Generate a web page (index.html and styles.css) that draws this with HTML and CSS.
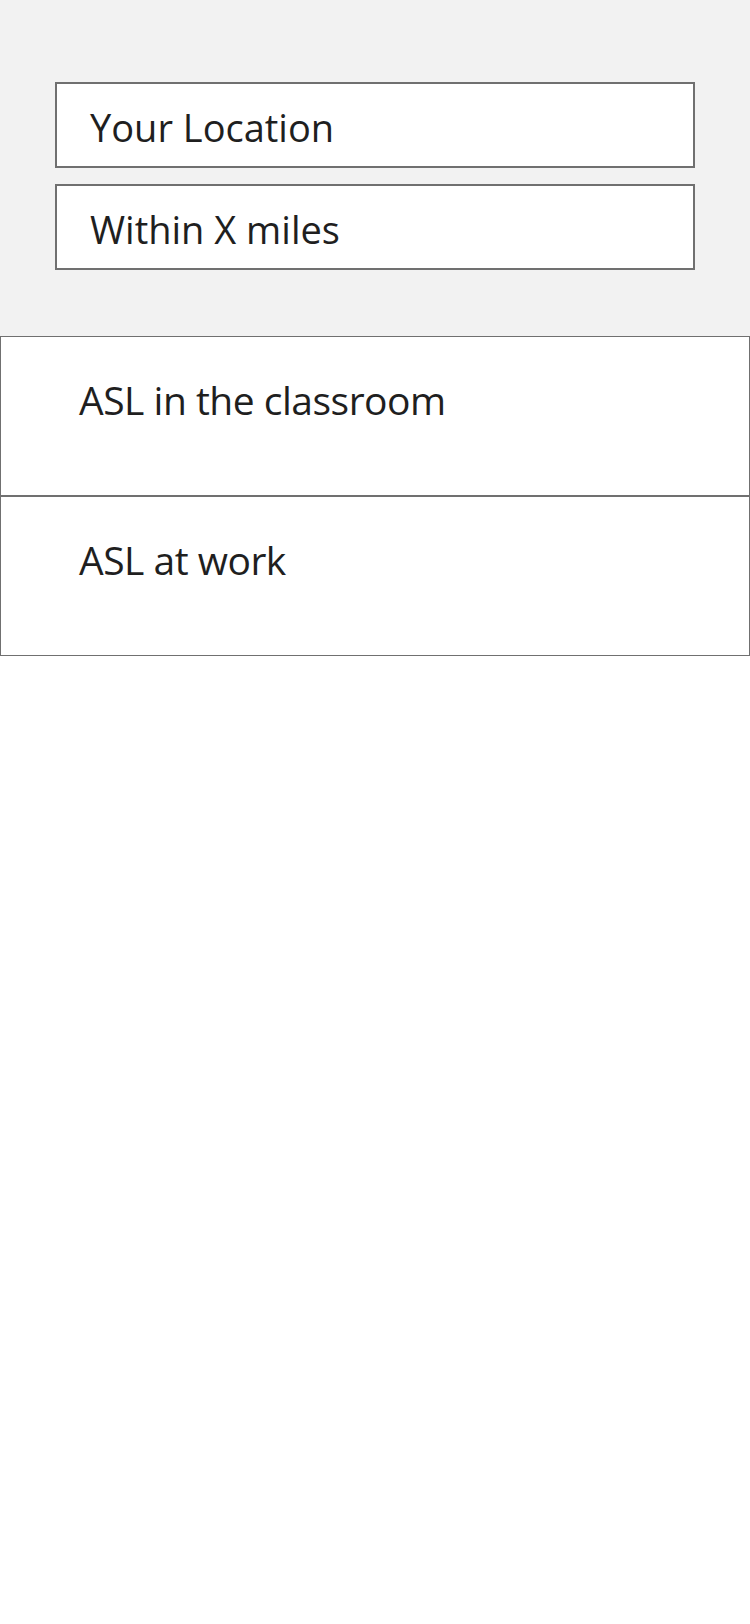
FILE: index.html
```html
<!DOCTYPE html>
<html lang="en">
<head>
<meta charset="utf-8">
<title>ASL</title>
<link rel="stylesheet" href="styles.css">
</head>
<body>
<div class="search">
  <div class="field">Your Location</div>
  <div class="field">Within X miles</div>
</div>
<ul class="list">
  <li class="item">ASL in the classroom</li>
  <li class="item">ASL at work</li>
</ul>
</body>
</html>
```
FILE: styles.css
```css
html, body {
  margin: 0;
  padding: 0;
  background: #ffffff;
}
body {
  font-family: "Open Sans", "Noto Sans", sans-serif;
  color: #1f1f1f;
}
.search {
  background: #f2f2f2;
  padding: 82px 55px 66px;
  display: flex;
  flex-direction: column;
  gap: 16px;
}
.field {
  box-sizing: border-box;
  height: 86px;
  border: 2px solid #707070;
  background: #ffffff;
  padding: 3px 0 0 33px;
  display: flex;
  align-items: center;
  font-size: 38px;
  letter-spacing: 0;
}
.list {
  list-style: none;
  margin: 0;
  padding: 0;
}
.item {
  box-sizing: border-box;
  height: 160px;
  border: 1px solid #707070;
  padding: 33px 0 0 78px;
  font-size: 39px;
  line-height: 60px;
  letter-spacing: -0.5px;
}
```
